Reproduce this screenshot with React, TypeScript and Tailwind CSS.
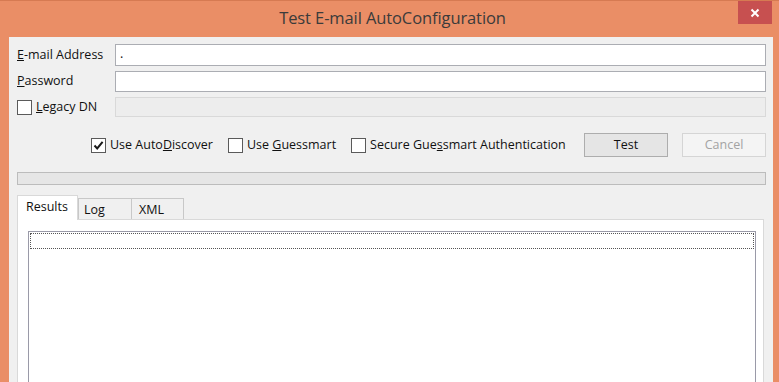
import React from 'react'

function Check({ checked }: { checked?: boolean }) {
    return (
        <span className="w-[15px] h-[15px] border border-[#5a5a5a] bg-white flex items-center justify-center shrink-0">
            {checked && (
                <svg width="11" height="11" viewBox="0 0 11 11">
                    <polyline points="1.5,5.5 4.2,8.4 9.6,1.8" fill="none" stroke="#1a1a1a" strokeWidth="2" />
                </svg>
            )}
        </span>
    )
}

export default function App() {
    return (
        <div className="w-[779px] h-[382px] overflow-hidden bg-[#EA8E66] border-t border-[#D67A52] flex flex-col font-['Open_Sans','Noto_Sans',sans-serif] text-[12.5px] text-[#111]">
            {/* Title bar */}
            <div className="relative h-[36px] flex items-center justify-center shrink-0">
                <span className="text-[16.5px] text-[#3b3b3b] tracking-[-0.1px] mt-[-1px] ml-[6px]">Test E-mail AutoConfiguration</span>
                <div className="absolute right-[7px] top-0 w-[34px] h-[23px] bg-[#C75050] flex items-center justify-center">
                    <svg width="10" height="10" viewBox="0 0 10 10">
                        <path d="M1.5 1.5 L8.5 8.5 M8.5 1.5 L1.5 8.5" stroke="white" strokeWidth="2" />
                    </svg>
                </div>
            </div>

            {/* Client area */}
            <div className="flex-1 ml-[9px] mr-[6px] bg-[#F0F0F0] flex flex-col pl-[8px] pr-[7px] pt-[7px]">
                <div className="flex items-center h-[22px]">
                    <span className="w-[98px] shrink-0"><u>E</u>-mail Address</span>
                    <div className="flex-1 h-full bg-white border border-[#ABADB3] pl-[4px] leading-[18px]">.</div>
                </div>
                <div className="flex items-center h-[21px] mt-[5px]">
                    <span className="w-[98px] shrink-0"><u>P</u>assword</span>
                    <div className="flex-1 h-full bg-white border border-[#ABADB3]" />
                </div>
                <div className="flex items-center h-[20px] mt-[5px]">
                    <span className="w-[98px] shrink-0 flex items-center gap-[4px]">
                        <Check />
                        <span><u>L</u>egacy DN</span>
                    </span>
                    <div className="flex-1 h-full bg-[#EDEDED] border border-[#D9D9D9]" />
                </div>

                {/* Options row */}
                <div className="flex items-center h-[24px] mt-[16px] pl-[74px]">
                    <label className="flex items-center gap-[4px]">
                        <Check checked />
                        <span>Use Auto<u>D</u>iscover</span>
                    </label>
                    <label className="flex items-center gap-[4px] ml-[15px]">
                        <Check />
                        <span>Use <u>G</u>uessmart</span>
                    </label>
                    <label className="flex items-center gap-[4px] ml-[15px]">
                        <Check />
                        <span>Secure Gue<u>s</u>smart Authentication</span>
                    </label>
                    <div className="ml-auto flex gap-[14px]">
                        <button className="w-[84px] h-[24px] bg-[#E5E5E5] border border-[#ADADAD] text-[#111]">Test</button>
                        <button className="w-[84px] h-[24px] bg-[#F4F4F4] border border-[#D5D5D5] text-[#A3A3A3]">Cancel</button>
                    </div>
                </div>

                {/* Progress bar */}
                <div className="h-[13px] mt-[15px] bg-[#E6E6E6] border border-[#BCBCBC]" />

                {/* Tabs */}
                <div className="flex items-end mt-[9px] h-[25px]">
                    <div className="w-[61px] h-[25px] bg-white border border-[#D9D9D9] border-b-0 pl-[8px] leading-[21px] relative z-10 mb-[-1px]">Results</div>
                    <div className="w-[54px] h-[21px] bg-[#F0F0F0] border border-[#C8C8C8] border-b-0 pl-[5px] leading-[22px]">Log</div>
                    <div className="w-[52px] h-[21px] bg-[#F0F0F0] border border-[#C8C8C8] border-b-0 border-l-0 pl-[7px] leading-[22px]">XML</div>
                </div>
                <div className="flex-1 mr-[2px] bg-white border border-[#D9D9D9] border-b-0 pl-[10px] pt-[11px] pr-[7px] flex">
                    <div className="flex-1 border border-[#9A9AA8] border-b-0 p-[1px]">
                        <div className="h-[16px] border border-dotted border-[#555]" />
                    </div>
                </div>
            </div>
        </div>
    )
}
